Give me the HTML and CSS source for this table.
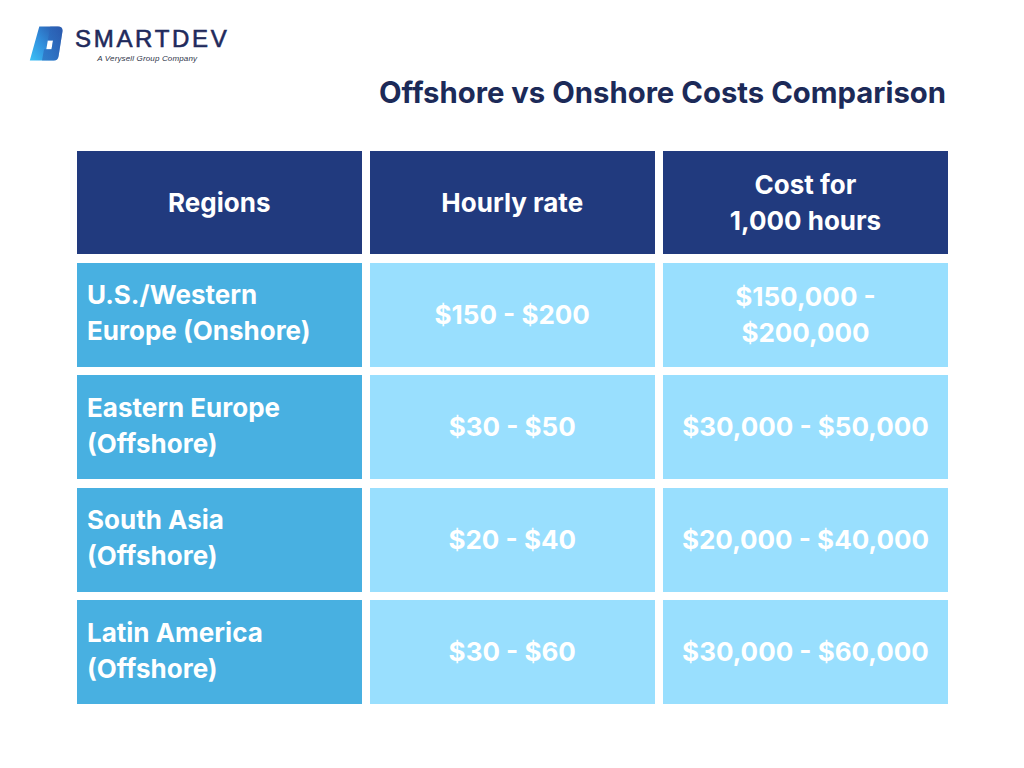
FILE: index.html
```html
<!DOCTYPE html>
<html lang="en">
<head>
<meta charset="utf-8">
<title>Offshore vs Onshore Costs Comparison</title>
<link rel="stylesheet" href="styles.css">
</head>
<body>
<div class="page">
  <header class="brand">
    <svg class="brand-mark" width="34" height="35" viewBox="28 26 34 35" aria-hidden="true">
      <defs>
        <linearGradient id="g1" x1="0" y1="1" x2="1" y2="0.2">
          <stop offset="0" stop-color="#3cc2f6"/>
          <stop offset="0.45" stop-color="#3191de"/>
          <stop offset="1" stop-color="#2a56aa"/>
        </linearGradient>
        <linearGradient id="g2" x1="0" y1="0" x2="0.6" y2="1">
          <stop offset="0" stop-color="#2c69bd"/>
          <stop offset="1" stop-color="#2a5aae"/>
        </linearGradient>
      </defs>
      <path fill-rule="evenodd" fill="url(#g1)"
        d="M38.3 26.5 H57 Q62.2 26.5 61.4 31.8 L57.6 56 Q56.9 60.5 52.8 60.5 H28.8 Z
           M46.8 40.5 H52 L50.5 49.2 H45.3 Z"/>
      <path fill="url(#g2)" opacity="0.55"
        d="M50.5 49.2 L52 40.5 H46.8 L49.2 26.5 H57 Q62.2 26.5 61.4 31.8 L57.6 56 Q56.9 60.5 52.8 60.5 H41 L43 49.2 Z"/>
    </svg>
    <div class="brand-text">
      <div class="brand-name">SMARTDEV</div>
      <div class="brand-sub">A Verysell Group Company</div>
    </div>
  </header>

  <h1 class="title">Offshore vs Onshore Costs Comparison</h1>

  <div class="table">
    <div class="cell head">Regions</div>
    <div class="cell head">Hourly rate</div>
    <div class="cell head">Cost for<br>1,000 hours</div>

    <div class="cell region">U.S./Western<br>Europe (Onshore)</div>
    <div class="cell value">$150 - $200</div>
    <div class="cell value">$150,000 -<br>$200,000</div>

    <div class="cell region">Eastern Europe<br>(Offshore)</div>
    <div class="cell value">$30 - $50</div>
    <div class="cell value">$30,000 - $50,000</div>

    <div class="cell region">South Asia<br>(Offshore)</div>
    <div class="cell value">$20 - $40</div>
    <div class="cell value">$20,000 - $40,000</div>

    <div class="cell region">Latin America<br>(Offshore)</div>
    <div class="cell value">$30 - $60</div>
    <div class="cell value">$30,000 - $60,000</div>
  </div>
</div>
</body>
</html>
```

FILE: styles.css
```css
html, body {
  margin: 0;
  padding: 0;
  background: #ffffff;
}

.page {
  width: 1024px;
  height: 768px;
  font-family: Inter, "Noto Sans", sans-serif;
  box-sizing: border-box;
  padding-top: 26px;
}

.brand {
  display: flex;
  align-items: flex-start;
  gap: 12px;
  margin-left: 29px;
  height: 40px;
}

.brand-mark {
  display: block;
  flex: none;
}

.brand-text {
  display: flex;
  flex-direction: column;
  align-items: center;
  padding-top: 1px;
}

.brand-name {
  font-family: "Liberation Sans", Arial, sans-serif;
  font-size: 24px;
  line-height: 24px;
  font-weight: 400;
  letter-spacing: 2.7px;
  color: #1f2a5c;
  -webkit-text-stroke: 0.6px #1f2a5c;
}

.brand-sub {
  font-family: "Liberation Sans", Arial, sans-serif;
  font-size: 8px;
  line-height: 10px;
  font-style: italic;
  letter-spacing: 0.15px;
  color: #2e3448;
  margin-top: 3px;
  margin-right: 10px;
}

.title {
  margin: 8.5px 78px 0 0;
  text-align: right;
  font-size: 29.3px;
  line-height: 36px;
  font-weight: 700;
  color: #1c2a58;
}

.table {
  display: grid;
  grid-template-columns: 284.5px 284.5px 285px;
  grid-template-rows: 103px repeat(4, 104px);
  column-gap: 8.5px;
  row-gap: 8.5px;
  margin: 40.5px 0 0 77px;
}

.cell {
  display: flex;
  align-items: center;
  box-sizing: border-box;
  color: #ffffff;
  font-size: 26px;
  line-height: 36px;
  font-weight: 700;
}

.head {
  background: #213a7e;
  justify-content: center;
  text-align: center;
}

.region {
  background: #48b0e1;
  padding-left: 10px;
  padding-bottom: 3px;
}

.value {
  background: #99dffe;
  justify-content: center;
  text-align: center;
}
```
